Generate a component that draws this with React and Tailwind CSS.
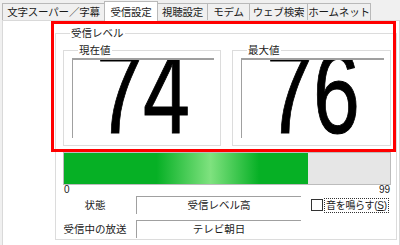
const tabs = [
  { label: "文字スーパー／字幕", w: "w-[103px]" },
  { label: "受信設定", w: "w-[54px]", active: true },
  { label: "視聴設定", w: "w-[51px]" },
  { label: "モデム", w: "w-[43px]" },
  { label: "ウェブ検索", w: "w-[59px]" },
  { label: "ホームネット", w: "w-[64px]" },
];

const Gauge = ({ title, value, width }) => (
  <fieldset className={`${width} border border-[#dcdcdc] pl-[8px] pr-[6px] pb-[7px]`}>
    <legend className="ml-[6px] px-[1px] text-[10.5px] leading-[12px] whitespace-nowrap">{title}</legend>
    <div className="mt-[2px] h-[80px] border-t-2 border-l border-[#a0a0a0] bg-white flex justify-center items-start overflow-hidden">
      <span className="block font-['Liberation_Sans',sans-serif] text-[117px] leading-[65px] text-black scale-x-[0.72] [-webkit-text-stroke:1px_black]">
        {value}
      </span>
    </div>
  </fieldset>
);

const Row = ({ label, value, children }) => (
  <div className="flex items-center h-[18px]">
    <div className="w-[64px] text-center text-[10.5px] leading-[14px] whitespace-nowrap">{label}</div>
    <div className="ml-[9px] w-[165px] h-[18px] border-t border-l border-[#a0a0a0] text-center text-[10.5px] leading-[16px] whitespace-nowrap">
      {value}
    </div>
    {children}
  </div>
);

export default function App() {
  const level = 74;
  return (
    <div className="relative w-[400px] h-[245px] overflow-hidden bg-[#f0f0f0] text-[#1a1a1a] font-['Noto_Sans_CJK_JP',sans-serif]">
      <div className="flex items-end h-[20px] pl-[2px]">
        {tabs.map((t, i) => (
          <div
            key={t.label}
            className={`${t.w} ${i > 0 ? "-ml-px" : ""} ${
              t.active
                ? "relative z-10 h-[20px] -mb-px bg-white"
                : "h-[17px] bg-[#f0f0f0]"
            } border-t border-l border-r border-[#b9b9b9] flex items-center justify-center text-[10.5px] leading-[14px] tracking-[-0.2px] whitespace-nowrap`}
          >
            {t.label}
          </div>
        ))}
      </div>
      <div className="ml-[2px] h-[230px] border border-[#d9d9d9] bg-white pt-[6px]">
        <fieldset className="ml-[52px] w-[342px] h-[213px] border border-[#dcdcdc] pl-[7px] pr-[5px]">
          <legend className="ml-[7px] px-[1px] text-[10.5px] leading-[12px]">受信レベル</legend>
          <div className="mt-[5px] flex gap-[11px]">
            <Gauge title="現在値" value="74" width="w-[158px]" />
            <Gauge title="最大値" value="76" width="w-[159px]" />
          </div>
          <div className="mt-[6px] h-[33px] border border-[#bcbcbc] bg-[#e6e6e6]">
            <div
              className="h-full bg-[linear-gradient(90deg,#06b025_0%,#06b025_38%,#7fe27f_60%,#06b025_80%,#06b025_100%)]"
              style={{ width: `${(level / 99) * 100}%` }}
            />
          </div>
          <div className="flex justify-between font-['Liberation_Sans',sans-serif] text-[10px] leading-[10px] px-px">
            <span>0</span>
            <span>99</span>
          </div>
          <div className="mt-[1px] flex flex-col gap-[6px]">
            <Row label="状態" value="受信レベル高">
              <label className="ml-[10px] flex items-center whitespace-nowrap">
                <span className="w-[12px] h-[12px] border border-[#333] bg-white" />
                <span className="ml-[1px] border border-dotted border-[#333] text-[10px] leading-[12px] tracking-[-0.3px] px-px">
                  音を鳴らす
                  <span className="font-['Liberation_Sans',sans-serif]">
                    (<span className="underline">S</span>)
                  </span>
                </span>
              </label>
            </Row>
            <Row label="受信中の放送" value="テレビ朝日" />
          </div>
        </fieldset>
      </div>
      <div className="absolute left-[51px] top-[21px] w-[345px] h-[131px] border-[3px] border-[#ff0000] pointer-events-none" />
    </div>
  );
}
